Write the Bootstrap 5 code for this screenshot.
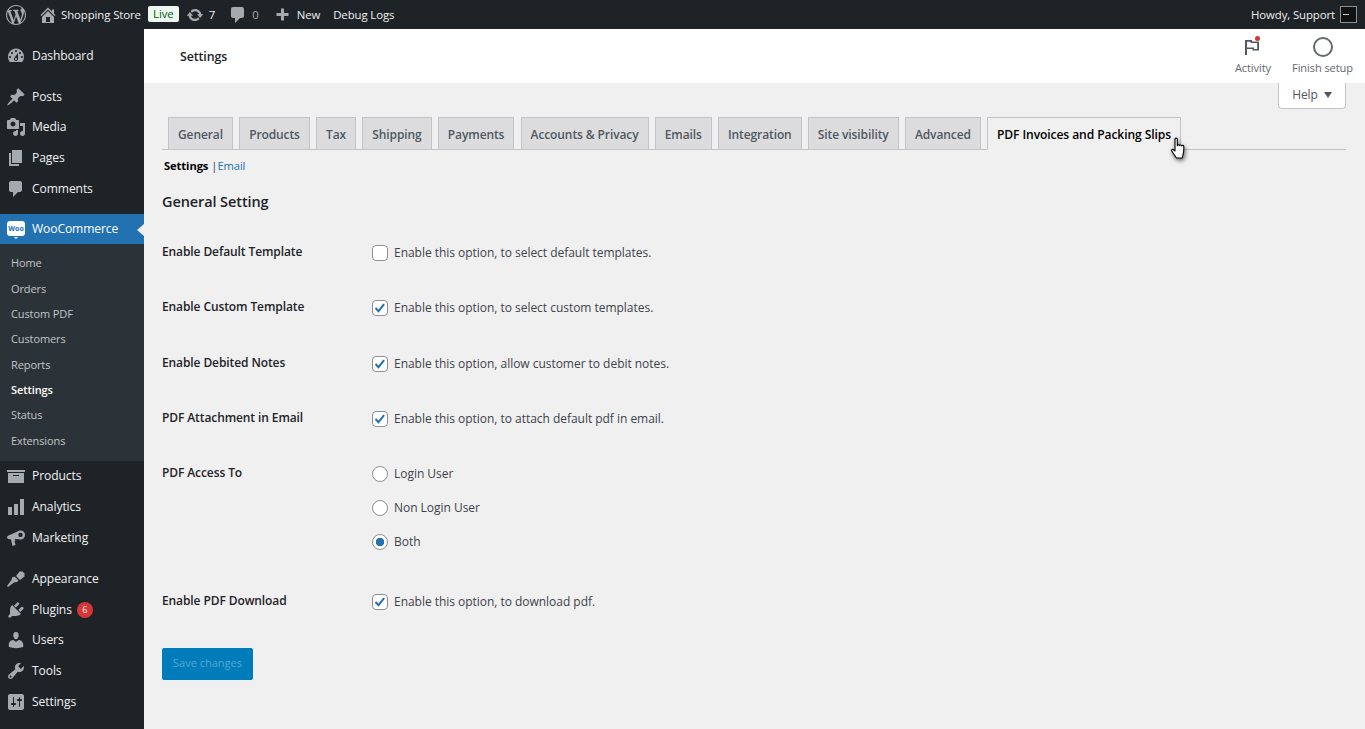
<!DOCTYPE html>
<html lang="en">
<head>
  <meta charset="UTF-8" />
  <title>Settings - Shopping Store</title>
  <link href="https://cdn.jsdelivr.net/npm/bootstrap@5.3.0/dist/css/bootstrap.min.css" rel="stylesheet" />
  <style>
    body { font-family: "Open Sans", "Noto Sans", sans-serif; font-size: 12px; background: #f0f0f1; color: #3c434a; overflow: hidden; letter-spacing: -.1px; }
    svg { display: block; flex: none; fill: currentColor; }

    /* top bar */
    .wp-topbar { height: 29px; background: #1d2327; color: #f0f0f1; flex: none; padding: 0 8px 0 6px; font-size: 11.4px; }
    .wp-topbar .ico { color: #a7aaad; }
    .l3 { margin-left: 3px; }
    .l4 { margin-left: 4px; }
    .l5 { margin-left: 5px; }
    .l7 { margin-left: 7px; }
    .l12 { margin-left: 12px; }
    .l13 { margin-left: 13px; }
    .l16 { margin-left: 16px; }
    .live-tag { background: #edfaef; color: #005c12; border-radius: 2px; width: 31px; height: 16px; line-height: 16px; text-align: center; margin-top: -2px; }
    .dim { color: #a7aaad; }
    .avatar { width: 17px; height: 17px; border: 1px solid #8c8f94; background: #111; position: relative; }
    .avatar::after { content: ""; position: absolute; left: 2px; right: 7px; top: 7px; height: 1px; background: #ccc; }

    /* sidebar */
    .wp-side { width: 144px; background: #1d2327; flex: none; padding-top: 12px; }
    .menu-item { height: 30.7px; display: flex; align-items: center; color: #f0f0f1; font-size: 12.1px; padding-left: 6px; gap: 6px; text-decoration: none; position: relative; }
    .menu-item .ico { color: #a7aaad; width: 20px; height: 20px; }
    .menu-item.current { background: #2271b1; color: #fff; }
    .menu-item.current::after { content: ""; position: absolute; right: 0; top: 10px; border: 6px solid transparent; border-right-color: #f0f0f1; border-left: 0; border-right-width: 7px; }
    .sep-gap { height: 9.6px; }
    .sep-gap.wide { height: 10.8px; }
    .sub-menu { background: #2c3338; padding: 6px 0 7.800px; }
    .sub-menu a { display: block; height: 25.35px; line-height: 25.35px; padding-left: 11px; color: #c3c4c7; font-size: 11px; text-decoration: none; }
    .sub-menu a.on { color: #fff; font-weight: 600; }
    .count-pill { width: 16px; height: 16px; border-radius: 50%; background: #d63638; color: #fff; font-size: 9px; line-height: 16px; text-align: center; margin-left: -1px; }
    .woo-ico { width: 18px; height: 15px; margin: 0 1px; background: #fff; color: #2271b1; border-radius: 3px; font-size: 7px; font-weight: 700; line-height: 15px; text-align: center; letter-spacing: 0; position: relative; }
    .woo-ico::after { content: ""; position: absolute; left: 7px; bottom: -3px; border: 2px solid transparent; border-top-color: #fff; border-bottom: 0; }

    /* header */
    .wc-head { height: 54px; background: #fff; flex: none; padding: 0 12px 0 36px; }
    .wc-head h1 { font-size: 12.4px; font-weight: 600; color: #1d2327; margin: 2px 0 0; }
    .head-acts { gap: 21px; padding-top: 1px; }
    .head-act { color: #646970; font-size: 11.1px; gap: 3px; }
    .flag-wrap { position: relative; color: #50575e; margin-left: -2px; }
    .flag-dot { position: absolute; top: -1px; right: 2px; width: 5px; height: 5px; border-radius: 50%; background: #d63638; }
    .ring { width: 20px; height: 20px; border: 2px solid #646970; border-radius: 50%; }

    /* page body */
    .wc-body { padding: 0 19px 0 18px; }
    .help-tab { width: 68px; height: 26px; background: #fff; border: 1px solid #c3c4c7; border-top: 0; border-radius: 0 0 4px 4px; color: #50575e; font-size: 12px; gap: 6px; padding-bottom: 2px; }
    .help-tab::after { content: ""; border: 4px solid transparent; border-top: 6px solid #50575e; border-bottom: 0; }
    .wc-tabs { margin-top: 8px; height: 33px; padding-left: 6px; gap: 6.2px; border-bottom: 1px solid #c3c4c7; }
    .wc-tabs .nav-link { height: 33px; padding: 0 9px; line-height: 33px; border: 1px solid #c3c4c7; border-radius: 0; background: #dcdcde; color: #50575e; font-weight: 600; font-size: 12px; margin: 0; }
    .wc-tabs .nav-link.active { background: #f0f0f1; color: #000; border-bottom-color: #f0f0f1; font-size: 12.1px; }
    .sub-links { padding: 8px 0 0 2px; line-height: 16px; font-size: 11.2px; }
    .sub-links b { color: #000; font-weight: 700; }
    .sub-links a { color: #2271b1; text-decoration: none; }
    .sub-sep { margin: 0 0 0 3px; }
    .sect-title { font-size: 14.5px; font-weight: 600; color: #1d2327; margin: 18px 0 13px; line-height: 20px; }
    .opt-row { min-height: 55.5px; margin: 0; letter-spacing: -.03px; }
    .opt-row > div { padding: 0; }
    .opt-label { width: 210px; flex: none; font-weight: 600; color: #1d2327; margin-top: -2px; letter-spacing: -.1px; }
    .opt-row .form-check { padding: 0; margin: 0; display: flex; align-items: center; gap: 6px; min-height: 0; }
    .opt-row .form-check-label { color: #3c434a; }
    .opt-row .form-check-input { width: 16px; height: 16px; margin: 0; float: none; flex: none; background-color: #fff; border: 1px solid #8c8f94; }
    .opt-row .form-check-input[type=checkbox] { border-radius: 4px; }
    .opt-row .form-check-input:checked { background-color: #fff; border-color: #8c8f94; background-size: 16px; }
    .opt-row .form-check-input[type=checkbox]:checked { background-image: url("data:image/svg+xml,%3csvg xmlns='http://www.w3.org/2000/svg' viewBox='0 0 16 16'%3e%3cpath fill='none' stroke='%232271b1' stroke-width='2' d='M3.500 8l3 3.200 5.600-7'/%3e%3c/svg%3e"); }
    .opt-row .form-check-input[type=radio]:checked { background-image: radial-gradient(circle, #2271b1 0 4px, transparent 4.5px); }
    .radio-row { padding: 10px 0 15px; align-items: flex-start; }
    .radio-row .opt-label { margin-top: 7px; }
    .radio-row .form-check { height: 34px; }
    .btn-save { width: 91px; height: 32px; margin-top: 18px; padding: 0; background: #007cba; border: 0; border-radius: 2px; color: #5aa5cd; font-size: 11px; }

    /* pointer over the active tab */
    .hand { position: absolute; left: 1170px; top: 137px; filter: drop-shadow(1px 2px 2px rgba(0,0,0,.6)); }
  </style>
</head>
<body>
  <div class="d-flex flex-column vh-100">

    <!-- admin bar -->
    <div class="wp-topbar d-flex align-items-center">
      <svg class="ico" width="20" height="20" viewBox="0 0 20 20"><path d="M20 10c0-5.510-4.490-10-10-10C4.480 0 0 4.490 0 10c0 5.520 4.480 10 10 10 5.510 0 10-4.480 10-10zM7.780 15.370L4.370 6.220c.55-.02 1.170-.08 1.170-.08.5-.06.44-1.130-.06-1.110 0 0-1.450.11-2.370.11-.18 0-.37 0-.58-.01C4.120 2.690 6.890 1.050 10 1.050c2.320 0 4.430.87 6.040 2.360-.68-.11-1.650.39-1.650 1.580 0 .74.45 1.360.9 2.100.35.61.55 1.360.55 2.460 0 1.490-1.400 5-1.400 5l-3.030-8.370c.54-.02.82-.17.82-.17.5-.05.44-1.250-.06-1.220 0 0-1.440.12-2.380.12-.87 0-2.330-.12-2.330-.12-.5-.03-.56 1.200-.06 1.220l.92.080 1.260 3.410zM17.410 10c.24-.64.74-1.870.43-4.250.7 1.290 1.050 2.710 1.050 4.250 0 3.290-1.730 6.240-4.400 7.780.97-2.590 1.940-5.200 2.920-7.780zM6.100 18.090C3.120 16.650 1.110 13.530 1.110 10c0-1.300.23-2.480.72-3.590C3.250 10.300 4.670 14.200 6.100 18.090zm4.030-6.630l2.580 6.980c-.86.290-1.760.45-2.710.45-.79 0-1.570-.11-2.290-.33.81-2.380 1.620-4.740 2.420-7.100z"/></svg>
      <svg class="ico l12" width="20" height="20" viewBox="0 0 20 20"><path fill-rule="evenodd" d="M16 8.500l1.530 1.530-1.060 1.060L10 4.620l-6.470 6.470-1.060-1.060L10 2.500l4 4v-2h2v4zm-6-2.460l6 5.990V18H4v-5.970zM12 17v-5H8v5h4z"/></svg>
      <span class="l3">Shopping Store</span>
      <span class="live-tag l7">Live</span>
      <svg class="ico l7" width="18" height="18" viewBox="0 0 20 20"><path d="M10.200 3.280c3.530 0 6.430 2.610 6.920 6h2.080l-3.500 4-3.500-4h2.320c-.45-1.970-2.210-3.450-4.320-3.450-1.450 0-2.730.71-3.540 1.780L4.950 5.660C6.230 4.200 8.110 3.280 10.200 3.280zm-.4 13.440c-3.520 0-6.430-2.610-6.920-6H.8l3.500-4c1.170 1.330 2.330 2.670 3.500 4H5.480c.45 1.970 2.210 3.450 4.320 3.450 1.450 0 2.730-.71 3.540-1.780l1.710 1.950c-1.280 1.460-3.150 2.380-5.250 2.380z"/></svg>
      <span class="l5">7</span>
      <svg class="ico l13" width="20" height="20" viewBox="0 0 20 20"><path d="M5 2h9c1.100 0 2 .9 2 2v7c0 1.100-.9 2-2 2h-2l-5 5v-5H5c-1.100 0-2-.9-2-2V4c0-1.100.9-2 2-2z"/></svg>
      <span class="l4 dim">0</span>
      <svg class="ico l16" width="15" height="15" viewBox="0 0 20 20"><path d="M8 2h4v6h6v4h-6v6H8v-6H2V8h6z"/></svg>
      <span class="l7">New</span>
      <span class="l13">Debug Logs</span>
      <span class="ms-auto">Howdy, Support</span>
      <span class="avatar l5"></span>
    </div>

    <div class="d-flex flex-grow-1">

      <!-- left menu -->
      <nav class="wp-side">
        <a class="menu-item" href="#"><svg class="ico" viewBox="0 0 20 20"><path fill-rule="evenodd" d="M3.760 16h12.480c1.100-1.430 1.760-3.210 1.760-5.140C18 6.240 14.420 2.500 10 2.500S2 6.240 2 10.860c0 1.930.66 3.710 1.760 5.140zM10 4c.55 0 1 .45 1 1s-.45 1-1 1-1-.45-1-1 .45-1 1-1zM6 6c.55 0 1 .45 1 1s-.45 1-1 1-1-.45-1-1 .45-1 1-1zm8 0c.55 0 1 .45 1 1s-.45 1-1 1-1-.45-1-1 .45-1 1-1zm-5.370 5.550L12 7v6c0 1.100-.9 2-2 2s-2-.9-2-2c0-.57.24-1.080.63-1.450zM4 10c.55 0 1 .45 1 1s-.45 1-1 1-1-.45-1-1 .45-1 1-1zm12 0c.55 0 1 .45 1 1s-.45 1-1 1-1-.45-1-1 .45-1 1-1zm-5 3c0-.55-.45-1-1-1s-1 .45-1 1 .45 1 1 1 1-.45 1-1z"/></svg>Dashboard</a>
        <div class="sep-gap"></div>
        <a class="menu-item" href="#"><svg class="ico" viewBox="0 0 20 20"><path d="M10.440 3.020l1.820-1.820 6.360 6.350-1.830 1.820c-1.050-.68-2.480-.57-3.410.36l-.75.75c-.92.93-1.040 2.350-.35 3.400l-1.830 1.820-2.410-2.410-2.800 2.790c-.42.42-3.380 2.710-3.800 2.290s1.860-3.390 2.280-3.810l2.790-2.790L4.100 9.360l1.830-1.820c1.050.69 2.480.57 3.400-.36l.75-.75c.93-.92 1.050-2.350.36-3.410z"/></svg>Posts</a>
        <a class="menu-item" href="#"><svg class="ico" viewBox="0 0 20 20"><path fill-rule="evenodd" d="M13 11V4c0-.55-.45-1-1-1h-1.670L9 1H5L3.670 3H2c-.55 0-1 .45-1 1v7c0 .55.45 1 1 1h10c.55 0 1-.45 1-1zM7 4.500c1.380 0 2.500 1.120 2.500 2.500S8.380 9.500 7 9.500 4.500 8.380 4.500 7 5.620 4.500 7 4.500zM14 6h5v10.500c0 1.380-1.120 2.500-2.500 2.500S14 17.880 14 16.500s1.120-2.500 2.500-2.500c.17 0 .34.020.5.050V9h-3V6zm-4 8.050V13h2v3.500c0 1.380-1.120 2.500-2.500 2.500S7 17.880 7 16.500 8.120 14 9.500 14c.17 0 .34.020.5.050z"/></svg>Media</a>
        <a class="menu-item" href="#"><svg class="ico" viewBox="0 0 20 20"><path d="M6 15V2h10v13H6zm-1 1h8v2H3V5h2v11z"/></svg>Pages</a>
        <a class="menu-item" href="#"><svg class="ico" viewBox="0 0 20 20"><path d="M5 2h9c1.100 0 2 .9 2 2v7c0 1.100-.9 2-2 2h-2l-5 5v-5H5c-1.100 0-2-.9-2-2V4c0-1.100.9-2 2-2z"/></svg>Comments</a>
        <div class="sep-gap"></div>
        <a class="menu-item current" href="#"><span class="woo-ico">Woo</span>WooCommerce</a>
        <div class="sub-menu">
          <a href="#">Home</a>
          <a href="#">Orders</a>
          <a href="#">Custom PDF</a>
          <a href="#">Customers</a>
          <a href="#">Reports</a>
          <a class="on" href="#">Settings</a>
          <a href="#">Status</a>
          <a href="#">Extensions</a>
        </div>
        <a class="menu-item" href="#"><svg class="ico" viewBox="0 0 20 20"><path fill-rule="evenodd" d="M19 4v2H1V4h18zM2 7h16v10H2V7zm11 3V9H7v1h6z"/></svg>Products</a>
        <a class="menu-item" href="#"><svg class="ico" viewBox="0 0 20 20"><path d="M18 18V2h-4v16h4zm-6 0V7H8v11h4zm-6 0v-8H2v8h4z"/></svg>Analytics</a>
        <a class="menu-item" href="#"><svg class="ico" viewBox="0 0 20 20"><path fill-rule="evenodd" d="M14.500 2.500a4.500 4.500 0 0 1 4.500 4.500 4.500 4.500 0 0 1-4.500 4.500c-.4 0-.8-.1-1.100-.2L8.500 11l1 1.500-1 .5 1 4-3 1-1.500-6.500-2.500-.5A2 2 0 0 1 1 9.500a2 2 0 0 1 1.500-2L11 3.700a4.500 4.500 0 0 1 3.500-1.200zm0 2.200a2.200 2.200 0 1 0 0 4.400 2.200 2.200 0 0 0 0-4.400z"/></svg>Marketing</a>
        <div class="sep-gap wide"></div>
        <a class="menu-item" href="#"><svg class="ico" viewBox="0 0 20 20"><path d="M14 2l1 1 1-1 3 3-1 1 1 1-5 4-4-4zM8.500 7.500l4 4-1.500 1.500-3 .5L2 18l-1-1 4.500-6 .5-2.500z"/></svg>Appearance</a>
        <a class="menu-item" href="#"><svg class="ico" viewBox="0 0 20 20"><path d="M13.110 4.360L9.870 7.600 8 5.730l3.240-3.240c.35-.34 1.050-.2 1.560.32.520.51.66 1.210.31 1.550zm-8 1.770l.91-1.120 9.010 9.010-1.190.84c-.71.71-2.630 1.160-3.820 1.160H6.140L4.900 17.260c-.59.59-1.540.59-2.120 0-.59-.58-.59-1.530 0-2.120l1.240-1.240v-3.880c0-1.130.4-3.050 1.090-3.890zm7.260 3.970l3.240-3.240c.34-.35 1.040-.21 1.550.31.52.51.66 1.210.31 1.550l-3.240 3.250z"/></svg>Plugins<span class="count-pill">6</span></a>
        <a class="menu-item" href="#"><svg class="ico" viewBox="0 0 20 20"><path d="M10 9.250c-2.270 0-2.730-3.440-2.730-3.440C7 4.020 7.820 2 9.970 2c2.160 0 2.980 2.020 2.710 3.810 0 0-.41 3.440-2.680 3.440zm0 2.570L12.720 10c2.390 0 4.520 2.330 4.520 4.530v2.490s-3.650 1.130-7.240 1.130c-3.650 0-7.240-1.130-7.240-1.130v-2.490c0-2.250 1.940-4.480 4.470-4.480z"/></svg>Users</a>
        <a class="menu-item" href="#"><svg class="ico" viewBox="0 0 20 20"><path fill-rule="evenodd" d="M16.680 9.770c-1.340 1.340-3.300 1.670-4.950.99l-5.410 6.520c-.99.99-2.590.99-3.570 0-.99-.98-.99-2.580 0-3.570l6.520-5.420c-.68-1.650-.35-3.610.99-4.950 1.280-1.280 3.120-1.620 4.720-1.060l-2.890 2.890 2.820 2.820 2.860-2.870c.53 1.580.18 3.390-1.090 4.670zM3.810 16.210c.4.39 1.040.39 1.430 0 .4-.4.4-1.040 0-1.430-.39-.4-1.030-.4-1.430 0-.39.39-.39 1.030 0 1.430z"/></svg>Tools</a>
        <a class="menu-item" href="#"><svg class="ico" viewBox="0 0 20 20"><path fill-rule="evenodd" d="M18 16V4c0-1.100-.9-2-2-2H4c-1.100 0-2 .9-2 2v12c0 1.100.9 2 2 2h12c1.100 0 2-.9 2-2zM8 11h1c.55 0 1 .45 1 1s-.45 1-1 1H8v1.500c0 .28-.22.5-.5.5s-.5-.22-.5-.5V13H6c-.55 0-1-.45-1-1s.45-1 1-1h1V5.500c0-.28.22-.5.5-.5s.5.22.5.5V11zm5-2h-1c-.55 0-1-.45-1-1s.45-1 1-1h1V5.500c0-.28.22-.5.5-.5s.5.22.5.5V7h1c.55 0 1 .45 1 1s-.45 1-1 1h-1v5.500c0 .28-.22.5-.5.5s-.5-.22-.5-.5V9z"/></svg>Settings</a>
      </nav>

      <!-- main -->
      <main class="flex-grow-1 d-flex flex-column">
        <div class="wc-head d-flex align-items-center">
          <h1>Settings</h1>
          <div class="head-acts ms-auto d-flex">
            <div class="head-act d-flex flex-column align-items-center">
              <span class="flag-wrap"><svg width="20" height="20" viewBox="0 0 20 20"><path fill-rule="evenodd" d="M3 3h7v1.500h7v9h-6.500V12H5v6H3zm2 1.800v5.700h7v1.500h3.200V6H8.500V4.800z"/></svg><span class="flag-dot"></span></span>
              Activity
            </div>
            <div class="head-act d-flex flex-column align-items-center">
              <span class="ring d-block"></span>
              Finish setup
            </div>
          </div>
        </div>

        <div class="wc-body">
          <div class="d-flex justify-content-end">
            <div class="help-tab d-flex align-items-center justify-content-center">Help</div>
          </div>

          <ul class="nav wc-tabs">
            <li class="nav-item"><a class="nav-link" href="#">General</a></li>
            <li class="nav-item"><a class="nav-link" href="#">Products</a></li>
            <li class="nav-item"><a class="nav-link" href="#">Tax</a></li>
            <li class="nav-item"><a class="nav-link" href="#">Shipping</a></li>
            <li class="nav-item"><a class="nav-link" href="#">Payments</a></li>
            <li class="nav-item"><a class="nav-link" href="#">Accounts &amp; Privacy</a></li>
            <li class="nav-item"><a class="nav-link" href="#">Emails</a></li>
            <li class="nav-item"><a class="nav-link" href="#">Integration</a></li>
            <li class="nav-item"><a class="nav-link" href="#">Site visibility</a></li>
            <li class="nav-item"><a class="nav-link" href="#">Advanced</a></li>
            <li class="nav-item"><a class="nav-link active" href="#">PDF Invoices and Packing Slips</a></li>
          </ul>

          <div class="sub-links"><b>Settings</b><span class="sub-sep">|</span><a href="#">Email</a></div>
          <h2 class="sect-title">General Setting</h2>

          <form>
            <div class="row opt-row align-items-center">
              <div class="opt-label col-auto">Enable Default Template</div>
              <div class="col">
                <div class="form-check"><input class="form-check-input" type="checkbox" id="o1" /><label class="form-check-label" for="o1">Enable this option, to select default templates.</label></div>
              </div>
            </div>
            <div class="row opt-row align-items-center">
              <div class="opt-label col-auto">Enable Custom Template</div>
              <div class="col">
                <div class="form-check"><input class="form-check-input" type="checkbox" id="o2" checked /><label class="form-check-label" for="o2">Enable this option, to select custom templates.</label></div>
              </div>
            </div>
            <div class="row opt-row align-items-center">
              <div class="opt-label col-auto">Enable Debited Notes</div>
              <div class="col">
                <div class="form-check"><input class="form-check-input" type="checkbox" id="o3" checked /><label class="form-check-label" for="o3">Enable this option, allow customer to debit notes.</label></div>
              </div>
            </div>
            <div class="row opt-row align-items-center">
              <div class="opt-label col-auto">PDF Attachment in Email</div>
              <div class="col">
                <div class="form-check"><input class="form-check-input" type="checkbox" id="o4" checked /><label class="form-check-label" for="o4">Enable this option, to attach default pdf in email.</label></div>
              </div>
            </div>
            <div class="row opt-row radio-row">
              <div class="opt-label col-auto">PDF Access To</div>
              <div class="col">
                <div class="form-check"><input class="form-check-input" type="radio" name="acc" id="r1" /><label class="form-check-label" for="r1">Login User</label></div>
                <div class="form-check"><input class="form-check-input" type="radio" name="acc" id="r2" /><label class="form-check-label" for="r2">Non Login User</label></div>
                <div class="form-check"><input class="form-check-input" type="radio" name="acc" id="r3" checked /><label class="form-check-label" for="r3">Both</label></div>
              </div>
            </div>
            <div class="row opt-row align-items-center">
              <div class="opt-label col-auto">Enable PDF Download</div>
              <div class="col">
                <div class="form-check"><input class="form-check-input" type="checkbox" id="o5" checked /><label class="form-check-label" for="o5">Enable this option, to download pdf.</label></div>
              </div>
            </div>
            <button type="button" class="btn btn-save">Save changes</button>
          </form>
        </div>
      </main>
    </div>
  </div>

  <svg class="hand" width="18" height="24" viewBox="0 0 18 24"><path fill="#fff" stroke="#000" stroke-width="1.100" stroke-linejoin="round" d="M5 2.200c0-1.500 2.300-1.500 2.300 0v6.500c.1-1.200 2-1.200 2.200 0 .2-1 2-1 2.200.2.300-.8 2-.7 2.100.6.100 3 .1 5.500-.8 8l-.8 3.500H6.500L2 14.500c-1-1.300.3-2.800 1.700-1.700l1.300 1.200z"/></svg>

  <script src="https://cdn.jsdelivr.net/npm/bootstrap@5.3.0/dist/js/bootstrap.bundle.min.js"></script>
</body>
</html>
